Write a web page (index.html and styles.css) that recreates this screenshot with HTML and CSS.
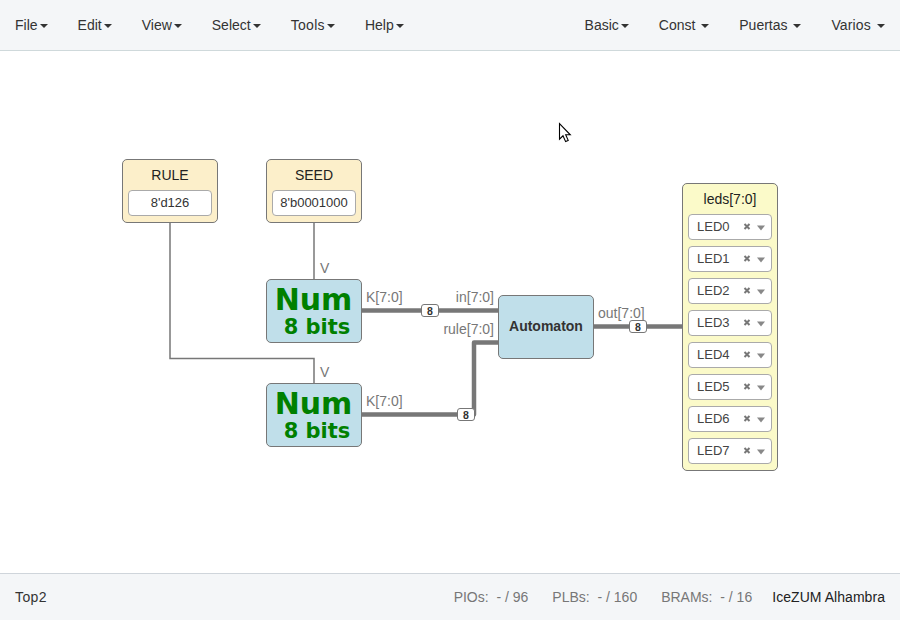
FILE: index.html
```html
<!DOCTYPE html>
<html lang="en">
<head>
<meta charset="utf-8">
<title>Top2</title>
<link rel="stylesheet" href="styles.css">
</head>
<body>
<nav class="navbar">
  <ul class="menu">
    <li>File<b class="caret"></b></li>
    <li>Edit<b class="caret"></b></li>
    <li>View<b class="caret"></b></li>
    <li>Select<b class="caret"></b></li>
    <li class="tools">Tools<b class="caret"></b></li>
    <li>Help<b class="caret"></b></li>
  </ul>
  <ul class="menu collections">
    <li>Basic<b class="caret"></b></li>
    <li>Const <b class="caret"></b></li>
    <li>Puertas <b class="caret"></b></li>
    <li>Varios <b class="caret"></b></li>
  </ul>
</nav>

<main class="canvas">
  <svg class="wires" width="900" height="522" viewBox="0 51 900 522">
    <g class="wire">
      <path d="M170 222V358.5H314V384"/>
      <path d="M314 222V280"/>
    </g>
    <g class="bus">
      <path d="M361 310.5H499"/>
      <path d="M361 414.5H474V342.5H499"/>
      <path d="M593 326.5H683"/>
    </g>
  </svg>

  <section class="block constant rule">
    <h2>RULE</h2>
    <div class="value">8'd126</div>
  </section>
  <section class="block constant seed">
    <h2>SEED</h2>
    <div class="value">8'b0001000</div>
  </section>

  <section class="block module num-a"><span class="num">Num</span><span class="bits">8 bits</span></section>
  <section class="block module num-b"><span class="num">Num</span><span class="bits">8 bits</span></section>
  <section class="block module automaton">Automaton</section>

  <section class="block leds">
    <h2>leds[7:0]</h2>
    <div class="pin">LED0<svg class="ctl" viewBox="0 0 22 10"><path class="x" d="M1.5 2L6.5 7M6.5 2L1.5 7"/><path d="M14 3.5H22L18 8.5Z"/></svg></div>
    <div class="pin">LED1<svg class="ctl" viewBox="0 0 22 10"><path class="x" d="M1.5 2L6.5 7M6.5 2L1.5 7"/><path d="M14 3.5H22L18 8.5Z"/></svg></div>
    <div class="pin">LED2<svg class="ctl" viewBox="0 0 22 10"><path class="x" d="M1.5 2L6.5 7M6.5 2L1.5 7"/><path d="M14 3.5H22L18 8.5Z"/></svg></div>
    <div class="pin">LED3<svg class="ctl" viewBox="0 0 22 10"><path class="x" d="M1.5 2L6.5 7M6.5 2L1.5 7"/><path d="M14 3.5H22L18 8.5Z"/></svg></div>
    <div class="pin">LED4<svg class="ctl" viewBox="0 0 22 10"><path class="x" d="M1.5 2L6.5 7M6.5 2L1.5 7"/><path d="M14 3.5H22L18 8.5Z"/></svg></div>
    <div class="pin">LED5<svg class="ctl" viewBox="0 0 22 10"><path class="x" d="M1.5 2L6.5 7M6.5 2L1.5 7"/><path d="M14 3.5H22L18 8.5Z"/></svg></div>
    <div class="pin">LED6<svg class="ctl" viewBox="0 0 22 10"><path class="x" d="M1.5 2L6.5 7M6.5 2L1.5 7"/><path d="M14 3.5H22L18 8.5Z"/></svg></div>
    <div class="pin">LED7<svg class="ctl" viewBox="0 0 22 10"><path class="x" d="M1.5 2L6.5 7M6.5 2L1.5 7"/><path d="M14 3.5H22L18 8.5Z"/></svg></div>
  </section>

  <span class="port v-a">V</span>
  <span class="port v-b">V</span>
  <span class="port k-a">K[7:0]</span>
  <span class="port k-b">K[7:0]</span>
  <span class="port in">in[7:0]</span>
  <span class="port rule-in">rule[7:0]</span>
  <span class="port out">out[7:0]</span>

  <span class="size size-a">8</span>
  <span class="size size-b">8</span>
  <span class="size size-c">8</span>

  <svg class="cursor" width="14" height="22" viewBox="0 0 14 22"><path d="M1.5 1.5V17.2L5 13.8L7.6 19.6L10.2 18.4L7.7 12.8H12.3Z"/></svg>
</main>

<footer class="statusbar">
  <span class="project">Top2</span>
  <div class="resources">
    <span class="res">PIOs: &nbsp;- / 96</span>
    <span class="res">PLBs: &nbsp;- / 160</span>
    <span class="res">BRAMs: &nbsp;- / 16</span>
    <span class="board">IceZUM Alhambra</span>
  </div>
</footer>
</body>
</html>
```
FILE: styles.css
```css
* {
  box-sizing: border-box;
}

body {
  display: flex;
  flex-direction: column;
  height: 620px;
  margin: 0;
  overflow: hidden;
  background: #fff;
  color: #333;
  font: 14px/20px "Liberation Sans", Arial, sans-serif;
}

.navbar {
  display: flex;
  justify-content: space-between;
  height: 51px;
  background: #f4f6f8;
  border-bottom: 1px solid #cfd9db;
}

.menu {
  display: flex;
  margin: 0;
  padding: 0;
  list-style: none;
}

.menu li {
  padding: 15px;
  white-space: nowrap;
}

.menu .tools {
  letter-spacing: 0.3px;
}

.collections li:last-child {
  letter-spacing: 0.15px;
}

.caret {
  display: inline-block;
  margin-left: 2px;
  vertical-align: middle;
  border-top: 4px solid;
  border-right: 4px solid transparent;
  border-left: 4px solid transparent;
}

.canvas {
  position: relative;
  flex: 1;
}

.wires {
  display: block;
}

.wires path {
  fill: none;
  stroke: #777;
}

.wire path {
  stroke-width: 1.5;
}

.bus path {
  stroke-width: 4.5;
  stroke-linejoin: round;
}

.block {
  position: absolute;
  width: 96px;
  height: 64px;
  border: 1px solid #777;
  border-radius: 5px;
}

.block h2 {
  margin: 0;
  color: #222;
  font-size: 14px;
  font-weight: normal;
  line-height: 20px;
  text-align: center;
}

.constant {
  padding: 5px;
  background: #fcefca;
}

.value,
.pin {
  height: 26px;
  background: #fff;
  border: 1px solid #aaa;
  border-radius: 4px;
  font-size: 13px;
  line-height: 24px;
}

.value {
  margin-top: 5px;
  text-align: center;
}

.rule { left: 122px; top: 108px; }
.seed { left: 266px; top: 108px; }

.module {
  background: #c0dfea;
}

.num-a,
.num-b {
  display: flex;
  flex-direction: column;
  color: #008000;
  font-family: "DejaVu Sans", sans-serif;
  font-weight: bold;
  text-align: center;
}

.num-a { left: 266px; top: 228px; }
.num-b { left: 266px; top: 332px; }

.num {
  padding: 4px 1px 0 0;
  font-size: 30px;
  line-height: 32px;
}

.bits {
  padding-left: 6px;
  font-size: 21px;
  line-height: 23px;
}

.automaton {
  left: 498px;
  top: 244px;
  font-weight: bold;
  line-height: 60px;
  text-align: center;
}

.leds {
  left: 682px;
  top: 132px;
  display: flex;
  flex-direction: column;
  gap: 6px;
  height: 288px;
  padding: 5px;
  background: #fbfac9;
}

.leds h2 {
  margin-bottom: -1px;
}

.pin {
  display: flex;
  align-items: center;
  justify-content: space-between;
  padding: 0 6px 0 8px;
  color: #444;
}

.ctl {
  width: 22px;
  height: 10px;
  fill: #888;
}

.ctl .x {
  stroke: #777;
  stroke-width: 2;
}

.port {
  position: absolute;
  color: #777;
  white-space: nowrap;
}

.v-a { left: 320px; top: 207px; }
.v-b { left: 320px; top: 311px; }
.k-a { left: 366px; top: 236px; }
.k-b { left: 366px; top: 340px; }
.in { right: 406px; top: 236px; }
.rule-in { right: 406px; top: 268px; }
.out { left: 598px; top: 252px; }

.size {
  position: absolute;
  width: 18px;
  height: 13px;
  background: #fff;
  border: 1px solid #777;
  border-radius: 3px;
  font-size: 10.5px;
  font-weight: bold;
  line-height: 12px;
  text-align: center;
}

.size-a { left: 421px; top: 253px; }
.size-b { left: 457px; top: 357px; }
.size-c { left: 629px; top: 269px; }

.cursor {
  position: absolute;
  left: 558px;
  top: 71px;
  fill: #fff;
  stroke: #000;
  stroke-width: 1.1;
}

.statusbar {
  display: flex;
  justify-content: space-between;
  height: 47px;
  padding: 13px 15px;
  background: #f4f6f8;
  border-top: 1px solid #cfd5db;
}

.project {
  letter-spacing: 0.4px;
}

.resources {
  display: flex;
}

.res {
  margin-right: 24px;
  color: #777;
}

.res:nth-child(3) {
  margin-right: 20px;
}

.board {
  color: #222;
  letter-spacing: 0.05px;
}
```
